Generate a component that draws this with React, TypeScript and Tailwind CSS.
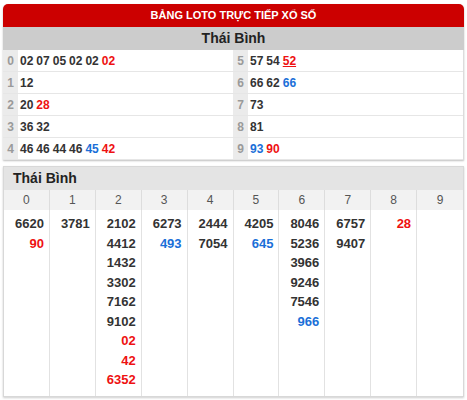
import React from "react";

type Part = { v: string; c?: "r" | "b"; u?: boolean };

const cls = (p: Part) =>
  p.c === "r" ? "text-[#ee1111]" : p.c === "b" ? "text-[#1a6fd8]" : "text-[#333]";

const left: Part[][] = [
  [{ v: "02" }, { v: "07" }, { v: "05" }, { v: "02" }, { v: "02" }, { v: "02", c: "r" }],
  [{ v: "12" }],
  [{ v: "20" }, { v: "28", c: "r" }],
  [{ v: "36" }, { v: "32" }],
  [{ v: "46" }, { v: "46" }, { v: "44" }, { v: "46" }, { v: "45", c: "b" }, { v: "42", c: "r" }],
];
const right: Part[][] = [
  [{ v: "57" }, { v: "54" }, { v: "52", c: "r", u: true }],
  [{ v: "66" }, { v: "62" }, { v: "66", c: "b" }],
  [{ v: "73" }],
  [{ v: "81" }],
  [{ v: "93", c: "b" }, { v: "90", c: "r" }],
];

const cols: Part[][] = [
  [{ v: "6620" }, { v: "90", c: "r" }],
  [{ v: "3781" }],
  [
    { v: "2102" },
    { v: "4412" },
    { v: "1432" },
    { v: "3302" },
    { v: "7162" },
    { v: "9102" },
    { v: "02", c: "r" },
    { v: "42", c: "r" },
    { v: "6352", c: "r" },
  ],
  [{ v: "6273" }, { v: "493", c: "b" }],
  [{ v: "2444" }, { v: "7054" }],
  [{ v: "4205" }, { v: "645", c: "b" }],
  [{ v: "8046" }, { v: "5236" }, { v: "3966" }, { v: "9246" }, { v: "7546" }, { v: "966", c: "b" }],
  [{ v: "6757" }, { v: "9407" }],
  [{ v: "28", c: "r" }],
  [],
];

function Line({ parts }: { parts: Part[] }) {
  return (
    <span className="flex gap-[3px]">
      {parts.map((p, i) => (
        <span key={i} className={`${cls(p)} ${p.u ? "underline" : ""}`}>
          {p.v}
        </span>
      ))}
    </span>
  );
}

function Half({ data, start }: { data: Part[][]; start: number }) {
  return (
    <div className="flex-1 flex flex-col">
      {data.map((row, i) => (
        <div key={i} className="flex h-[22px] border-b border-[#e6e6e6]">
          <div className="w-[15px] bg-[#ebebeb] text-[#9a9a9a] text-[12px] font-bold flex items-center justify-center">
            {start + i}
          </div>
          <div className="flex-1 flex items-center pl-[2px] text-[12px] font-bold">
            <Line parts={row} />
          </div>
        </div>
      ))}
    </div>
  );
}

export default function App() {
  return (
    <div
      className="w-[467px] h-[400px] bg-white pl-[3px] pr-[3px] pt-[4px]"
      style={{ fontFamily: '"Liberation Sans", Arial, sans-serif' }}
    >
      <div className="w-[461px] shadow-[0_1px_2px_rgba(0,0,0,0.25)] rounded-t-[5px]">
        <div className="h-[23px] bg-[#cc0000] rounded-t-[5px] flex items-center justify-center text-white text-[11px] font-bold">
          BẢNG LOTO TRỰC TIẾP XỔ SỐ
        </div>
        <div className="h-[23px] bg-[#cccccc] flex items-center justify-center text-[14px] font-bold text-[#222]">
          Thái Bình
        </div>
        <div className="flex border-r border-[#dcdcdc]">
          <Half data={left} start={0} />
          <Half data={right} start={5} />
        </div>
      </div>
      <div className="w-[461px] mt-[6px] border border-[#d8d8d8] shadow-[0_1px_2px_rgba(0,0,0,0.2)]">
        <div className="h-[23px] bg-[#e4e4e4] flex items-center pl-[9px] text-[14px] font-bold text-[#222]">
          Thái Bình
        </div>
        <div className="grid grid-cols-10 h-[20px] bg-[#f2f2f2]">
          {Array.from({ length: 10 }).map((_, i) => (
            <div
              key={i}
              className="border-r border-[#dddddd] last:border-r-0 flex items-center justify-center text-[12px] text-[#555]"
            >
              {i}
            </div>
          ))}
        </div>
        <div className="grid grid-cols-10 h-[186px]">
          {cols.map((col, i) => (
            <div
              key={i}
              className="border-r border-[#e2e2e2] last:border-r-0 flex flex-col items-end pr-[5px] pt-[4px] text-[13px] font-bold leading-[19.5px]"
            >
              {col.map((p, j) => (
                <span key={j} className={cls(p)}>
                  {p.v}
                </span>
              ))}
            </div>
          ))}
        </div>
      </div>
    </div>
  );
}
